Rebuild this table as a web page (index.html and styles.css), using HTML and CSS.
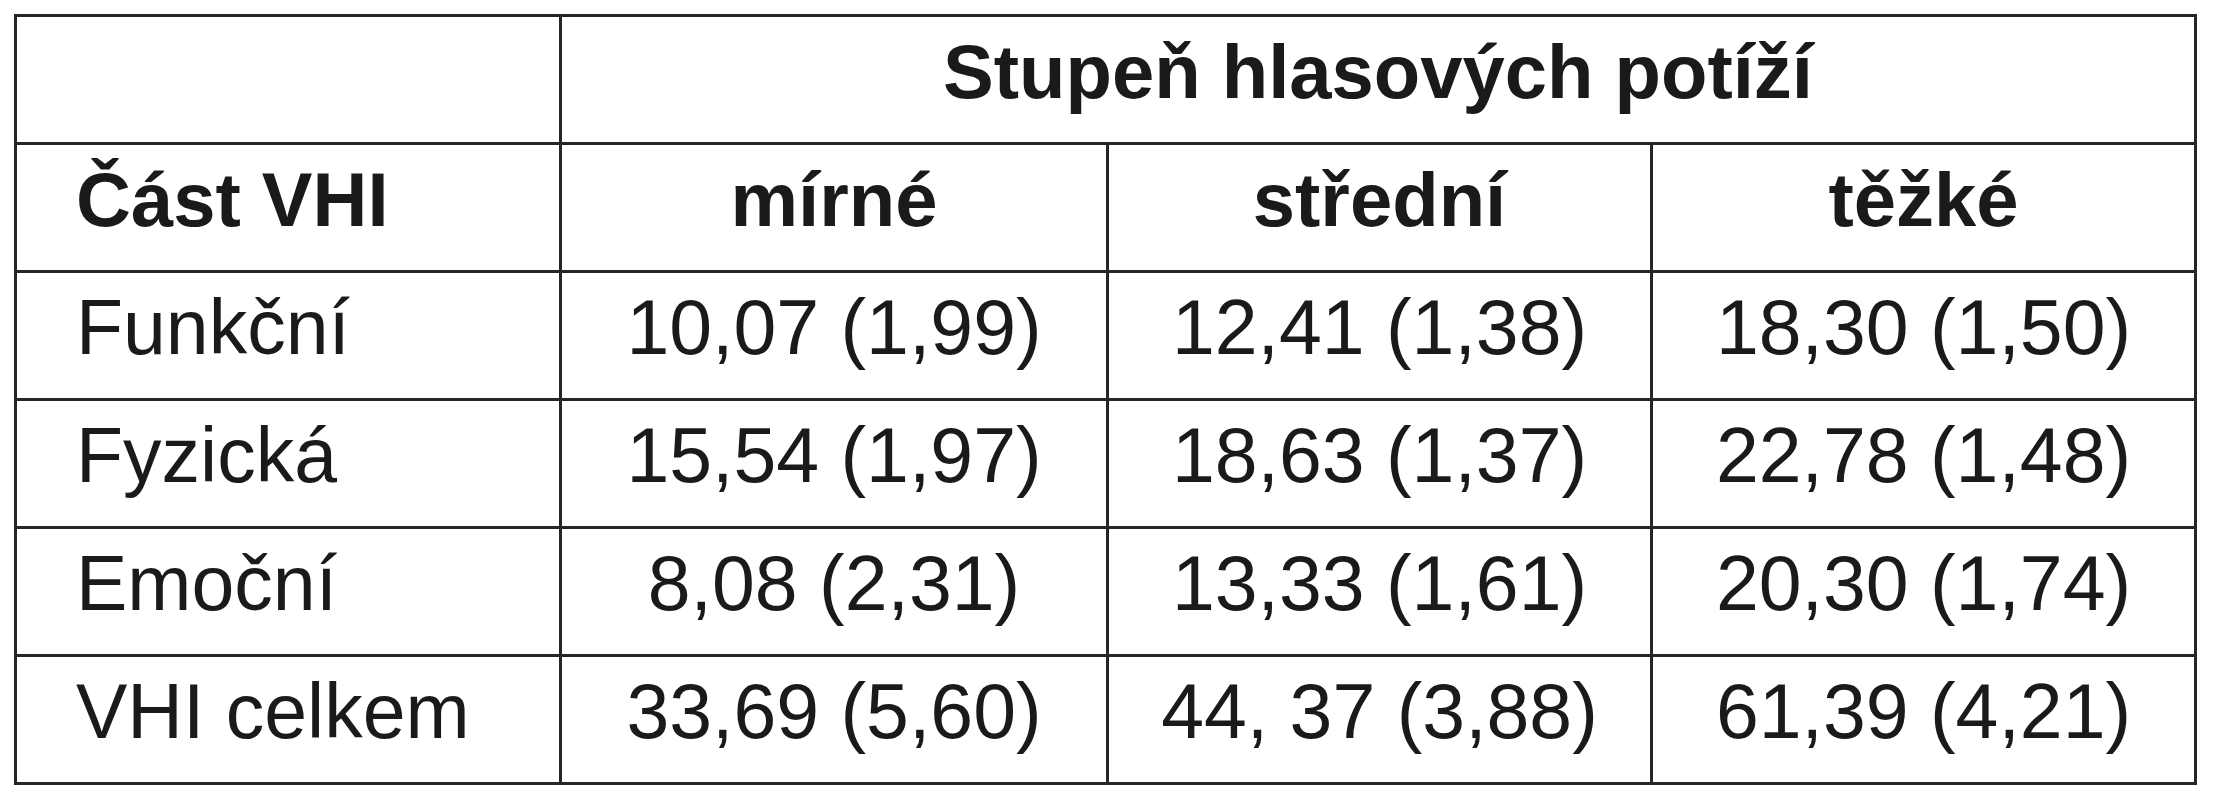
FILE: index.html
```html
<!DOCTYPE html>
<html lang="cs">
<head>
<meta charset="utf-8">
<title>Stupeň hlasových potíží</title>
<link rel="stylesheet" href="styles.css">
</head>
<body>
<table class="vhi">
  <colgroup>
    <col class="col-part">
    <col class="col-mild">
    <col class="col-mid">
    <col class="col-hard">
  </colgroup>
  <thead>
    <tr>
      <th class="blank"></th>
      <th class="group" colspan="3">Stupeň hlasových potíží</th>
    </tr>
    <tr>
      <th class="label">Část VHI</th>
      <th>mírné</th>
      <th>střední</th>
      <th>těžké</th>
    </tr>
  </thead>
  <tbody>
    <tr>
      <td class="label">Funkční</td>
      <td>10,07 (1,99)</td>
      <td>12,41 (1,38)</td>
      <td>18,30 (1,50)</td>
    </tr>
    <tr>
      <td class="label">Fyzická</td>
      <td>15,54 (1,97)</td>
      <td>18,63 (1,37)</td>
      <td>22,78 (1,48)</td>
    </tr>
    <tr>
      <td class="label">Emoční</td>
      <td>8,08 (2,31)</td>
      <td>13,33 (1,61)</td>
      <td>20,30 (1,74)</td>
    </tr>
    <tr>
      <td class="label">VHI celkem</td>
      <td>33,69 (5,60)</td>
      <td>44, 37 (3,88)</td>
      <td>61,39 (4,21)</td>
    </tr>
  </tbody>
</table>
</body>
</html>
```

FILE: styles.css
```css
html, body {
  margin: 0;
  padding: 0;
  background: #ffffff;
}

.vhi {
  margin: 14px 0 0 14px;
  border-collapse: collapse;
  table-layout: fixed;
  width: 2183px;
  font-family: "Liberation Sans", Arial, Helvetica, sans-serif;
  color: #1a1a1a;
}

.col-part { width: 545px; }
.col-mild { width: 547px; }
.col-mid  { width: 544px; }
.col-hard { width: 544px; }

.vhi tr {
  height: 128px;
}

.vhi th,
.vhi td {
  border: 3px solid #262626;
  padding: 0 0 16px 0;
  line-height: 1;
  text-align: center;
  vertical-align: middle;
  white-space: nowrap;
}

.vhi th {
  font-weight: bold;
  font-size: 76px;
}

.vhi td {
  font-weight: normal;
  font-size: 77px;
}

.vhi .label {
  text-align: left;
  padding-left: 59px;
}
```
